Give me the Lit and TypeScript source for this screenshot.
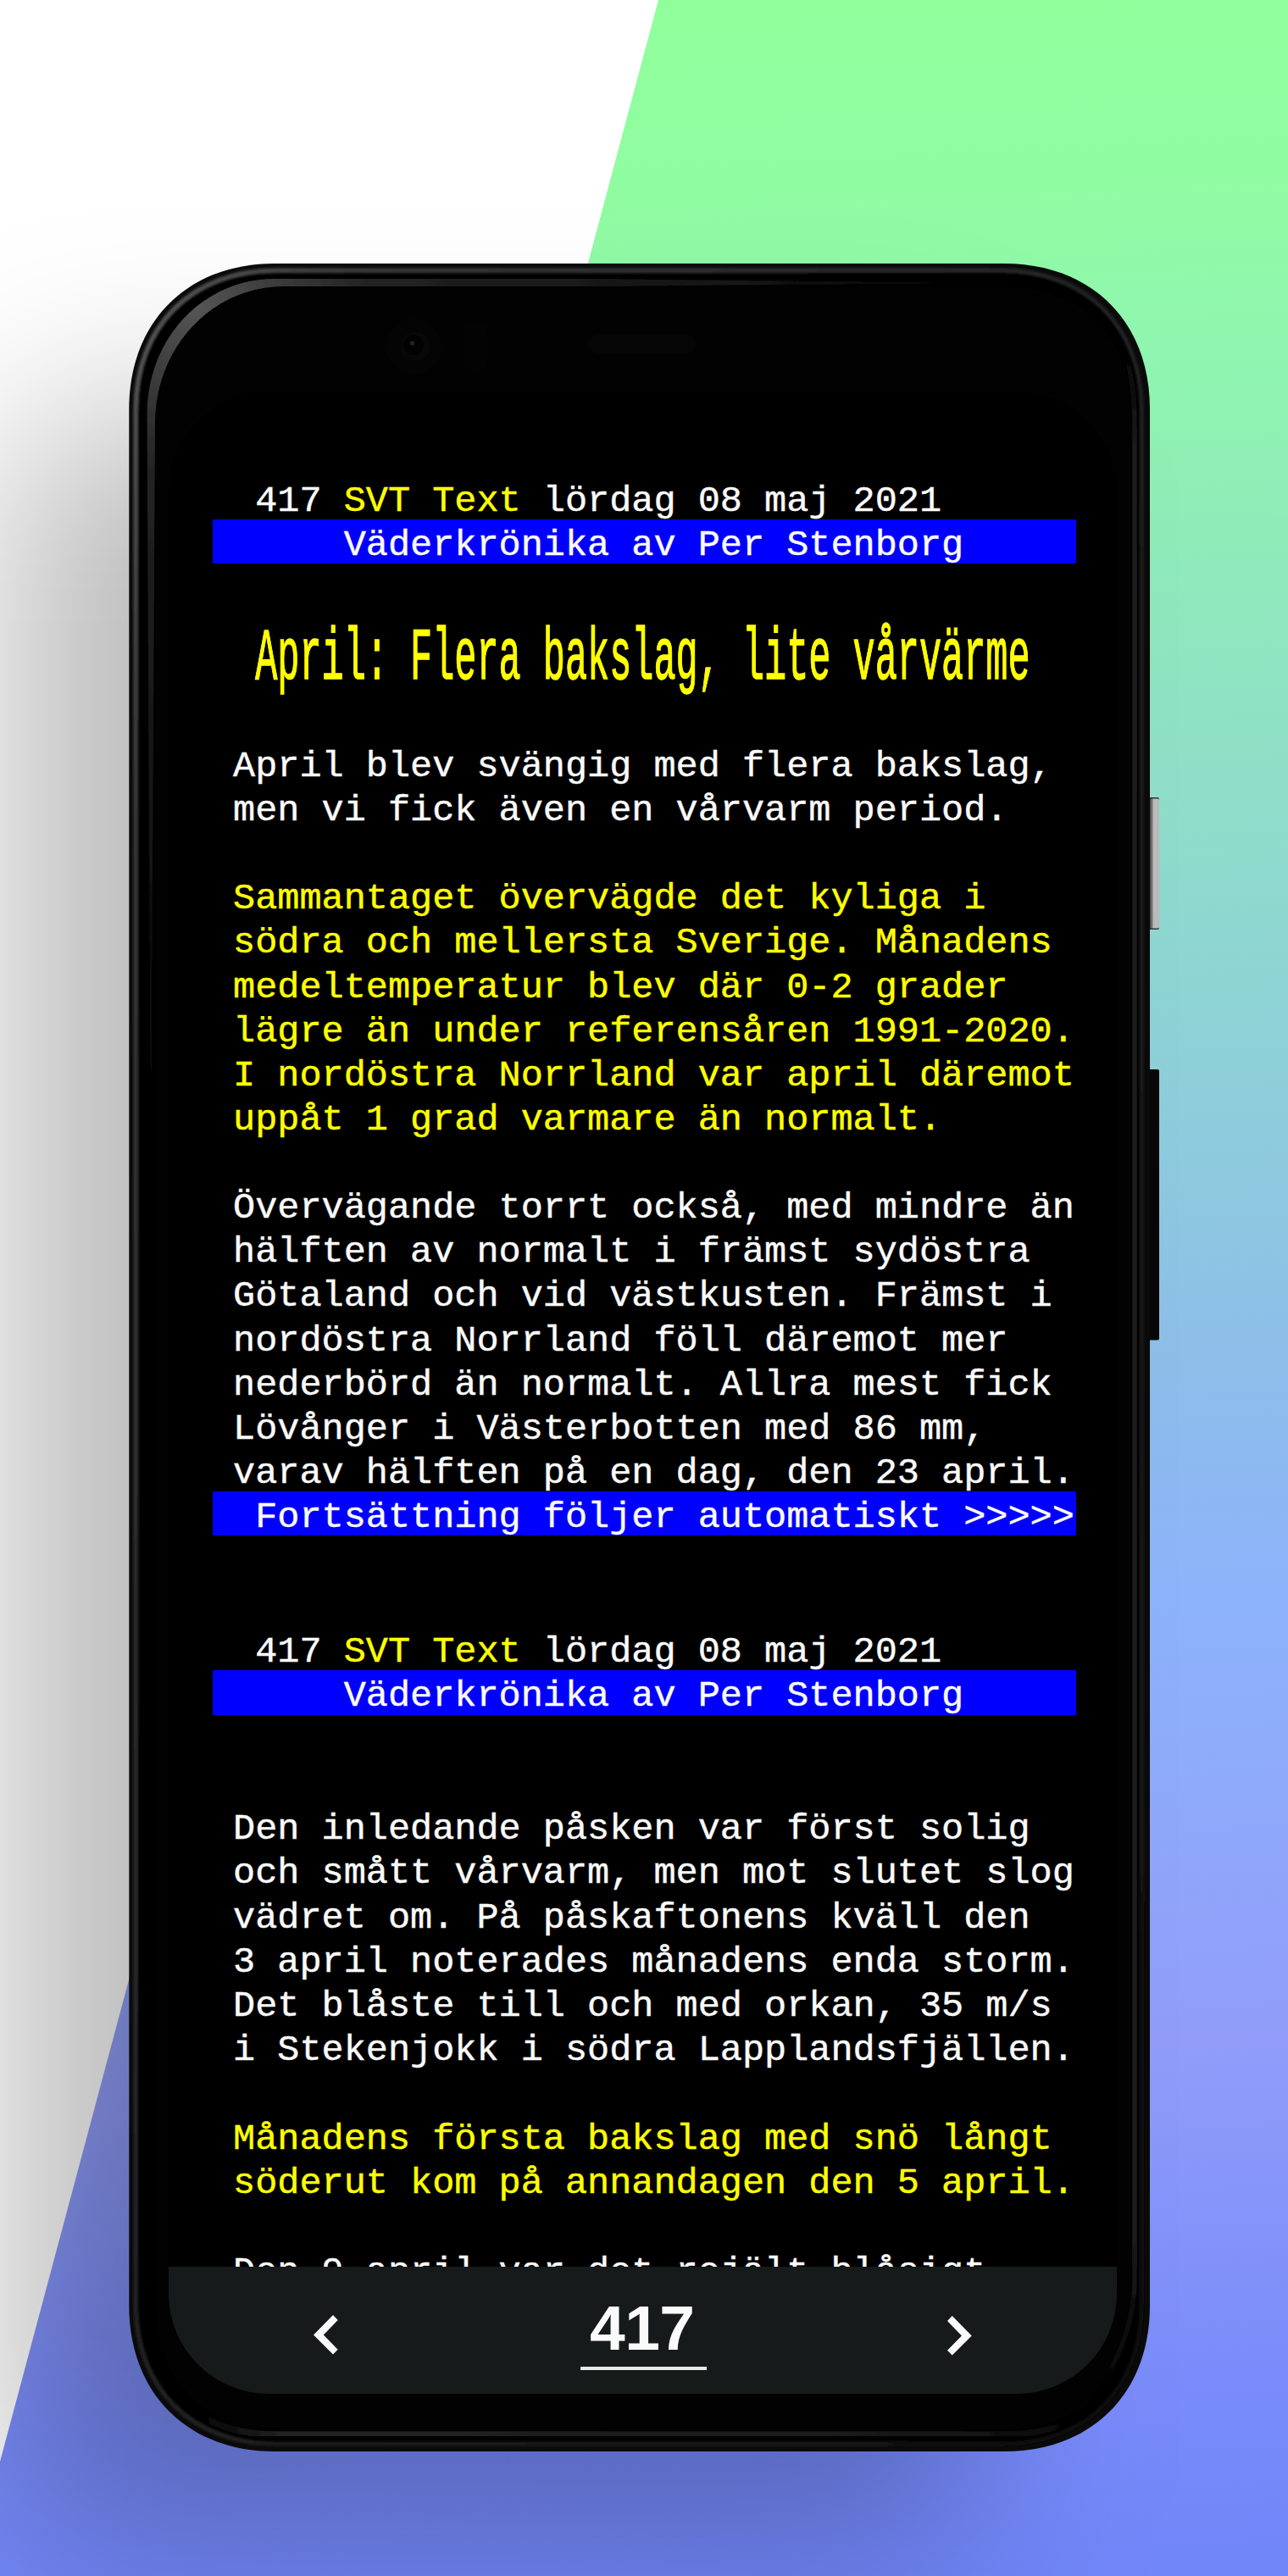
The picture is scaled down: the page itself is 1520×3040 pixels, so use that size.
import { LitElement, html, css, svg } from "lit";
import { customElement } from "lit/decorators.js";

type Tone = "w" | "y" | "bar";
type Row = [Tone, string];

const HEADING: Row = ["bar", "      Väderkrönika av Per Stenborg"];

const FIRST: Row[] = [
  ["w", " April blev svängig med flera bakslag,"],
  ["w", " men vi fick även en vårvarm period."],
  ["w", ""],
  ["y", " Sammantaget övervägde det kyliga i"],
  ["y", " södra och mellersta Sverige. Månadens"],
  ["y", " medeltemperatur blev där 0-2 grader"],
  ["y", " lägre än under referensåren 1991-2020."],
  ["y", " I nordöstra Norrland var april däremot"],
  ["y", " uppåt 1 grad varmare än normalt."],
  ["w", ""],
  ["w", " Övervägande torrt också, med mindre än"],
  ["w", " hälften av normalt i främst sydöstra"],
  ["w", " Götaland och vid västkusten. Främst i"],
  ["w", " nordöstra Norrland föll däremot mer"],
  ["w", " nederbörd än normalt. Allra mest fick"],
  ["w", " Lövånger i Västerbotten med 86 mm,"],
  ["w", " varav hälften på en dag, den 23 april."],
  ["bar", "  Fortsättning följer automatiskt >>>>>"],
];

const SECOND: Row[] = [
  ["w", ""],
  ["w", ""],
  ["w", " Den inledande påsken var först solig"],
  ["w", " och smått vårvarm, men mot slutet slog"],
  ["w", " vädret om. På påskaftonens kväll den"],
  ["w", " 3 april noterades månadens enda storm."],
  ["w", " Det blåste till och med orkan, 35 m/s"],
  ["w", " i Stekenjokk i södra Lapplandsfjällen."],
  ["w", ""],
  ["y", " Månadens första bakslag med snö långt"],
  ["y", " söderut kom på annandagen den 5 april."],
  ["w", ""],
  ["w", " Den 9 april var det rejält blåsigt"],
];

@customElement("teletext-view")
class TeletextView extends LitElement {
  static styles = css`
    :host {
      display: block;
      flex: 1;
      min-height: 0;
      overflow: hidden;
      padding: 99.5px 0 0 52px;
      font-family: "Liberation Mono", monospace;
      font-size: 43.54px;
      line-height: 62.3px;
      color: #fafafa;
      -webkit-text-stroke-width: 0.45px;
    }
    .page { --pitch: 52.13px; width: 1019.4px; margin-bottom: 107px; }
    .page + .page { --pitch: 52.25px; margin-bottom: 0; }
    .row { height: var(--pitch); white-space: pre; }
    .glyphs { display: block; transform: translateX(-1.5px) scaleY(0.99); transform-origin: 0 42.6px; }
    .y { color: #ff0; }
    .bar { background: #00f; }
    .title { display: flex; height: 208.52px; white-space: pre; color: #ff0; }
    .tall {
      height: 62.3px;
      margin-top: 94.6px;
      transform: translateX(-1.5px) scaleY(1.99);
      transform-origin: 0 42.8px;
      -webkit-text-stroke-width: 0.7px;
    }
  `;

  private row([tone, text]: Row) {
    return html`<div class="row ${tone}"><span class="glyphs">${text}</span></div>`;
  }

  private header() {
    return html`
      <div class="row"><span class="glyphs">${"  417 "}<span class="y">SVT Text</span>${" lördag 08 maj 2021"}</span></div>
      ${this.row(HEADING)}
    `;
  }

  render() {
    return html`
      <section class="page">
        ${this.header()}
        <div class="title"><span class="tall">${"  April: Flera bakslag, lite vårvärme"}</span></div>
        ${FIRST.map((r) => this.row(r))}
      </section>
      <section class="page">${this.header()}${SECOND.map((r) => this.row(r))}</section>
    `;
  }
}

@customElement("page-nav")
class PageNav extends LitElement {
  static styles = css`
    :host {
      display: grid;
      grid-template-columns: 486.5px 148.5px 1fr;
      height: 150px;
      flex: none;
      background: #161a1a;
      color: #fafafa;
      font-family: "Liberation Sans", sans-serif;
    }
    .prev { padding: 57.5px 0 0 171.5px; }
    .next { padding: 58.5px 0 0 284.2px; }
    svg { display: block; fill: #fafafa; }
    .field {
      height: 122px;
      box-sizing: border-box;
      border-bottom: 4px solid #e6eae4;
      padding-top: 30.5px;
      text-align: center;
      font-weight: 700;
      font-size: 75px;
      line-height: 84px;
      letter-spacing: -0.5px;
    }
    .num { padding-right: 3px; }
  `;
  render() {
    return html`
      <div class="prev"><svg width="29" height="47" viewBox="0 0 29 47"><path d="M23 0L28.7 6 11.8 23.4 28.7 40.8 23 46.6 0 23.4Z" /></svg></div>
      <div class="field"><span class="num">417</span></div>
      <div class="next"><svg width="29" height="47" viewBox="0 0 29 47"><path d="M5.7 0L0 6 16.9 23.4 0 40.8 5.7 46.6 28.7 23.4Z" /></svg></div>
    `;
  }
}

// Superelliptic rounded rectangle, x0..x1 by y0..y1, corner reach r.
const body = (x0: number, y0: number, x1: number, y1: number, r: number, k = 0.4) => {
  const c = r * k;
  return `M${x0 + r} ${y0}H${x1 - r}C${x1 - c} ${y0} ${x1} ${y0 + c} ${x1} ${y0 + r}V${y1 - r}C${x1} ${y1 - c} ${x1 - c} ${y1} ${x1 - r} ${y1}H${x0 + r}C${x0 + c} ${y1} ${x0} ${y1 - c} ${x0} ${y1 - r}V${y0 + r}C${x0} ${y0 + c} ${x0 + c} ${y0} ${x0 + r} ${y0}Z`;
};

@customElement("app-root")
class AppRoot extends LitElement {
  static styles = css`
    :host {
      display: grid;
      width: 1520px;
      height: 3040px;
      overflow: hidden;
    }
    .art, .screen { grid-area: 1 / 1; }
    .art { display: block; }
    .screen {
      display: flex;
      flex-direction: column;
      z-index: 1;
      width: 1119.5px;
      height: 2363px;
      margin: 461.7px 0 0 198.5px;
      border-radius: 118px;
      overflow: hidden;
      background: #000;
    }
  `;

  private art() {
    return svg`
      <defs>
        <linearGradient id="sky" gradientUnits="userSpaceOnUse" x1="760" y1="0" x2="900" y2="3040">
          <stop offset="0" stop-color="#90ff9b" />
          <stop offset="0.08" stop-color="#90fca2" />
          <stop offset="0.13" stop-color="#90f7ad" />
          <stop offset="0.2" stop-color="#8feeb6" />
          <stop offset="0.3" stop-color="#8fe0c6" />
          <stop offset="0.42" stop-color="#8ed0d8" />
          <stop offset="0.53" stop-color="#8dbfe8" />
          <stop offset="0.63" stop-color="#8db3fb" />
          <stop offset="0.8" stop-color="#919df9" />
          <stop offset="0.93" stop-color="#7a8cfa" />
          <stop offset="1" stop-color="#7186f9" />
        </linearGradient>
        <linearGradient id="rim" x1="0" y1="0" x2="1" y2="1">
          <stop offset="0" stop-color="#5a5a5a" />
          <stop offset="0.12" stop-color="#3a3a3a" />
          <stop offset="0.5" stop-color="#222" />
          <stop offset="1" stop-color="#0c0c0c" />
        </linearGradient>
        <radialGradient id="gloss" gradientUnits="userSpaceOnUse" cx="232" cy="362" r="1040">
          <stop offset="0" stop-color="#555" />
          <stop offset="0.09" stop-color="#3c3c3c" />
          <stop offset="0.2" stop-color="#222" />
          <stop offset="0.6" stop-color="#141414" />
          <stop offset="1" stop-color="#030303" />
        </radialGradient>
        <linearGradient id="foot" x1="0" x2="1">
          <stop offset="0" stop-color="#020202" />
          <stop offset="0.1" stop-color="#232323" />
          <stop offset="0.85" stop-color="#181818" />
          <stop offset="1" stop-color="#020202" />
        </linearGradient>
        <linearGradient id="edge" gradientUnits="userSpaceOnUse" x1="0" y1="410" x2="0" y2="2830">
          <stop offset="0" stop-color="#020202" />
          <stop offset="0.05" stop-color="#1c1c1c" />
          <stop offset="0.92" stop-color="#1b1b1b" />
          <stop offset="1" stop-color="#020202" />
        </linearGradient>
        <linearGradient id="silver" x1="0" x2="1">
          <stop offset="0" stop-color="#444" />
          <stop offset="0.3" stop-color="#8a8a8a" />
          <stop offset="0.4" stop-color="#bcbcbc" />
          <stop offset="1" stop-color="#b8b8b8" />
        </linearGradient>
        <filter id="far" x="-50%" y="-30%" width="200%" height="160%"><feGaussianBlur stdDeviation="112" /></filter>
        <filter id="soft" x="-5%" y="-5%" width="110%" height="110%"><feGaussianBlur stdDeviation="1.5" /></filter>
        <filter id="crisp" x="-5%" y="-5%" width="110%" height="110%"><feGaussianBlur stdDeviation="0.7" /></filter>
      </defs>
      <rect width="1520" height="3040" fill="#fff" />
      <path d="M777 0H1520V3040H0V2905Z" fill="url(#sky)" />
      <rect x="5" y="485" width="1145" height="2525" rx="100" fill="#000" fill-opacity="0.26" filter="url(#far)" />
      <rect x="1350" y="941" width="18" height="156" rx="2" fill="#333" />
      <rect x="1357" y="942.5" width="11" height="153" rx="1.5" fill="url(#silver)" />
      <rect x="1350" y="1262" width="18" height="319.5" rx="2" fill="#070707" />
      <path d=${body(152.3, 311, 1357, 2893, 172)} fill="#0a0a0a" />
      <path d=${body(160, 319, 1347, 2884, 165)} fill="#000" stroke="url(#rim)" stroke-width="5" filter="url(#soft)" />
      <path d=${body(166, 325, 1344, 2880, 158)} fill="#000" filter="url(#soft)" />
      <path d=${body(184, 339, 1334, 2867, 145)} fill="#020202" />
      <path d="M173.5 490C173.5 400 238 329 325 329H700L1160 334 700 338H335C250 338 183 410 183 500L178 1400Z" fill="url(#gloss)" filter="url(#crisp)" />
      <path d="M1325 410Q1339 445 1339 500V2690Q1339 2760 1290 2830" fill="none" stroke="url(#edge)" stroke-width="5.5" filter="url(#crisp)" />
      <path d="M232 2848Q270 2873 325 2873H1185Q1240 2873 1280 2850" fill="none" stroke="url(#foot)" stroke-width="7.5" filter="url(#crisp)" />
      <circle cx="488.5" cy="409" r="33" fill="#040404" />
      <circle cx="490" cy="409" r="17" fill="#080808" />
      <circle cx="488" cy="407" r="12" fill="#020202" />
      <circle cx="486.5" cy="405" r="2.8" fill="#222" />
      <rect x="547" y="379" width="28" height="61" rx="14" fill="#030303" />
      <rect x="694" y="395" width="127" height="22" rx="11" fill="#050505" />
    `;
  }

  render() {
    return html`
      <svg class="art" width="1520" height="3040" viewBox="0 0 1520 3040">${this.art()}</svg>
      <div class="screen">
        <teletext-view></teletext-view>
        <page-nav></page-nav>
      </div>
    `;
  }
}
